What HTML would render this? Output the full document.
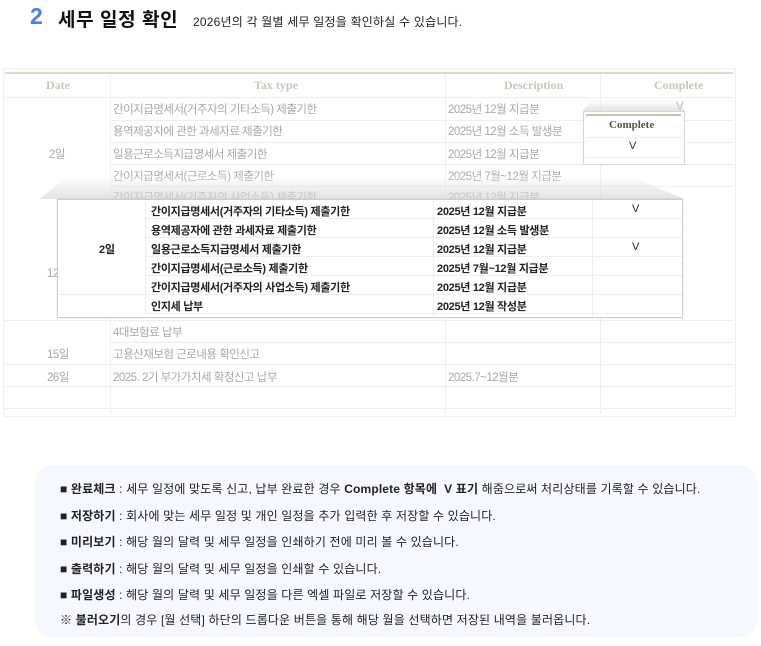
<!DOCTYPE html>
<html><head><meta charset="utf-8"><style>
body{margin:0;width:761px;height:646px;background:#fff;position:relative;overflow:hidden;font-family:"Liberation Sans","Noto Sans CJK KR",sans-serif;}
.a{position:absolute;white-space:nowrap}
.t{color:#a8a8a8;font-size:11.5px;letter-spacing:-0.5px}
.hl{position:absolute;height:1px;background:#eeeeee}
.vl{position:absolute;width:1px;background:#f0f0f0}
.hd{font-family:"Liberation Serif","Noto Serif CJK SC",serif;font-weight:bold;color:#c8c8bc;font-size:12px}
.p{color:#222;font-size:11px;font-weight:bold;letter-spacing:-0.3px}
.b{font-size:12px;color:#222;letter-spacing:0.15px}
</style></head><body>
<div class="a" style="left:30px;top:3px;font-size:23px;font-weight:bold;color:#4a7df0">2</div>
<div class="a" style="left:58px;top:5px;font-size:19px;font-weight:bold;color:#111;letter-spacing:0.6px">세무 일정 확인</div>
<div class="a" style="left:193px;top:13px;font-size:12px;color:#222;letter-spacing:0.2px">2026년의 각 월별 세무 일정을 확인하실 수 있습니다.</div>

<!-- table -->
<div style="position:absolute;left:3px;top:68px;width:731px;height:347px;border:1px solid #f0f0f0;"></div>
<div class="a" style="left:5px;top:72px;width:728px;height:2px;background:#dedbc8"></div>
<div class="vl" style="left:110px;top:74px;height:340px"></div>
<div class="vl" style="left:445px;top:74px;height:340px"></div>
<div class="vl" style="left:600px;top:74px;height:340px"></div>
<div class="hl" style="left:5px;top:97px;width:728px"></div>
<div class="hl" style="left:110px;top:120px;width:623px"></div>
<div class="hl" style="left:110px;top:142px;width:623px"></div>
<div class="hl" style="left:110px;top:164px;width:623px"></div>
<div class="hl" style="left:110px;top:186px;width:623px"></div>
<div class="hl" style="left:5px;top:320px;width:728px"></div>
<div class="hl" style="left:110px;top:342px;width:623px"></div>
<div class="hl" style="left:5px;top:364px;width:728px"></div>
<div class="hl" style="left:5px;top:386px;width:728px"></div>
<div class="hl" style="left:5px;top:408px;width:728px"></div>
<div class="a hd" style="left:46px;top:78px">Date</div>
<div class="a hd" style="left:254px;top:78px">Tax type</div>
<div class="a hd" style="left:504px;top:78px">Description</div>
<div class="a hd" style="left:654px;top:78px">Complete</div>
<div class="a t" style="left:113px;top:101px">간이지급명세서(거주자의 기타소득) 제출기한</div>
<div class="a t" style="left:448px;top:101px">2025년 12월 지급분</div>
<div class="a t" style="left:676px;top:101px">V</div>
<div class="a t" style="left:113px;top:123px">용역제공자에 관한 과세자료 제출기한</div>
<div class="a t" style="left:448px;top:123px">2025년 12월 소득 발생분</div>
<div class="a t" style="left:49px;top:146px">2일</div>
<div class="a t" style="left:113px;top:146px">일용근로소득지급명세서 제출기한</div>
<div class="a t" style="left:448px;top:146px">2025년 12월 지급분</div>
<div class="a t" style="left:113px;top:168px">간이지급명세서(근로소득) 제출기한</div>
<div class="a t" style="left:448px;top:168px">2025년 7월~12월 지급분</div>
<div class="a t" style="left:113px;top:189px">간이지급명세서(거주자의 사업소득) 제출기한</div>
<div class="a t" style="left:448px;top:189px">2025년 12월 지급분</div>
<div class="a t" style="left:47px;top:268px">12</div>
<div class="a t" style="left:113px;top:324px">4대보험료 납부</div>
<div class="a t" style="left:47px;top:346px">15일</div>
<div class="a t" style="left:113px;top:346px">고용산재보험 근로내용 확인신고</div>
<div class="a t" style="left:47px;top:369px">26일</div>
<div class="a t" style="left:113px;top:369px">2025. 2기 부가가치세 확정신고 납부</div>
<div class="a t" style="left:448px;top:369px">2025.7~12월분</div>

<!-- big popup -->
<div class="a" style="left:40px;top:176px;width:644px;height:23px;clip-path:polygon(27px 0,590px 0,644px 23px,0 23px);background:linear-gradient(rgba(255,255,255,0.2),rgba(215,215,215,0.7))"></div>
<div class="a" style="left:57px;top:199px;width:624px;height:117px;background:#fff;border:1px solid #cccccc;box-shadow:0 0 2px rgba(0,0,0,0.1)"></div>
<div class="vl" style="left:145px;top:200px;height:116px;background:#eee"></div>
<div class="vl" style="left:433px;top:200px;height:116px;background:#eee"></div>
<div class="vl" style="left:592px;top:200px;height:116px;background:#eee"></div>
<div class="hl" style="left:145px;top:218px;width:537px"></div>
<div class="hl" style="left:145px;top:237px;width:537px"></div>
<div class="hl" style="left:145px;top:256px;width:537px"></div>
<div class="hl" style="left:145px;top:275px;width:537px"></div>
<div class="hl" style="left:58px;top:294px;width:624px"></div>
<div class="hl" style="left:145px;top:313px;width:537px"></div>
<div class="a p" style="left:151px;top:203px">간이지급명세서(거주자의 기타소득) 제출기한</div>
<div class="a p" style="left:437px;top:203px">2025년 12월 지급분</div>
<div class="a" style="left:632px;top:203px;font-size:11px;color:#222">V</div>
<div class="a p" style="left:151px;top:222px">용역제공자에 관한 과세자료 제출기한</div>
<div class="a p" style="left:437px;top:222px">2025년 12월 소득 발생분</div>
<div class="a p" style="left:99px;top:241px">2일</div>
<div class="a p" style="left:151px;top:241px">일용근로소득지급명세서 제출기한</div>
<div class="a p" style="left:437px;top:241px">2025년 12월 지급분</div>
<div class="a" style="left:632px;top:241px;font-size:11px;color:#222">V</div>
<div class="a p" style="left:151px;top:260px">간이지급명세서(근로소득) 제출기한</div>
<div class="a p" style="left:437px;top:260px">2025년 7월~12월 지급분</div>
<div class="a p" style="left:151px;top:279px">간이지급명세서(거주자의 사업소득) 제출기한</div>
<div class="a p" style="left:437px;top:279px">2025년 12월 지급분</div>
<div class="a p" style="left:151px;top:298px">인지세 납부</div>
<div class="a p" style="left:437px;top:298px">2025년 12월 작성분</div>

<!-- small popup -->
<div class="a" style="left:583px;top:100px;width:102px;height:11px;clip-path:polygon(8px 0,94px 0,102px 11px,0 11px);background:linear-gradient(rgba(255,255,255,0.2),rgba(215,215,215,0.7))"></div>
<div class="a" style="left:583px;top:111px;width:100px;height:52px;background:#fff;border:1px solid #d6d6d6"></div>
<div class="a" style="left:586px;top:114px;width:95px;height:2px;background:#c9c6ae"></div>
<div class="a" style="left:609px;top:119px;font-family:'Liberation Serif',serif;font-weight:bold;font-size:11px;color:#55553a">Complete</div>
<div class="hl" style="left:586px;top:137px;width:95px"></div>
<div class="a" style="left:629px;top:140px;font-size:11px;color:#333">V</div>
<div class="hl" style="left:586px;top:157px;width:95px"></div>

<!-- info box -->
<div class="a" style="left:35px;top:465px;width:722px;height:172px;background:#f5f9ff;border-radius:16px"></div>
<div class="a b" style="left:60px;top:480px">■ <b>완료체크</b> : 세무 일정에 맞도록 신고, 납부 완료한 경우 <b>Complete 항목에 &nbsp;V 표기</b> 해줌으로써 처리상태를 기록할 수 있습니다.</div>
<div class="a b" style="left:60px;top:507px">■ <b>저장하기</b> : 회사에 맞는 세무 일정 및 개인 일정을 추가 입력한 후 저장할 수 있습니다.</div>
<div class="a b" style="left:60px;top:533px">■ <b>미리보기</b> : 해당 월의 달력 및 세무 일정을 인쇄하기 전에 미리 볼 수 있습니다.</div>
<div class="a b" style="left:60px;top:560px">■ <b>출력하기</b> : 해당 월의 달력 및 세무 일정을 인쇄할 수 있습니다.</div>
<div class="a b" style="left:60px;top:586px">■ <b>파일생성</b> : 해당 월의 달력 및 세무 일정을 다른 엑셀 파일로 저장할 수 있습니다.</div>
<div class="a b" style="left:60px;top:611px">※ <b>불러오기</b>의 경우 [월 선택] 하단의 드롭다운 버튼을 통해 해당 월을 선택하면 저장된 내역을 불러옵니다.</div>
</body></html>
